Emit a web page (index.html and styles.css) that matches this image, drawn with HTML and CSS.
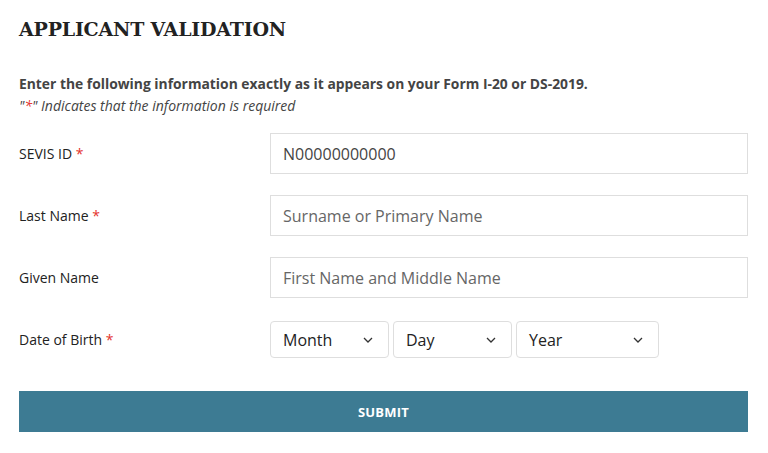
FILE: index.html
```html
<!DOCTYPE html>
<html lang="en">
<head>
<meta charset="utf-8">
<title>Applicant Validation</title>
<link rel="stylesheet" href="styles.css">
</head>
<body>
<main class="page">
  <h1 class="title">APPLICANT VALIDATION</h1>
  <p class="intro">Enter the following information exactly as it appears on your Form I-20 or DS-2019.</p>
  <p class="note">"<span class="req">*</span>" Indicates that the information is required</p>
  <form class="form">
    <div class="row">
      <label class="label" for="sevis">SEVIS ID <span class="req">*</span></label>
      <input class="field" id="sevis" type="text" value="N00000000000">
    </div>
    <div class="row">
      <label class="label" for="last">Last Name <span class="req">*</span></label>
      <input class="field" id="last" type="text" placeholder="Surname or Primary Name">
    </div>
    <div class="row">
      <label class="label" for="given">Given Name</label>
      <input class="field" id="given" type="text" placeholder="First Name and Middle Name">
    </div>
    <div class="row">
      <span class="label">Date of Birth <span class="req">*</span></span>
      <div class="dob">
        <div class="select sel-month"><span>Month</span><svg class="chev" width="10" height="6" viewBox="0 0 10 6"><path d="M1 1l4 4 4-4" fill="none" stroke="#333" stroke-width="1.3"/></svg></div>
        <div class="select sel-day"><span>Day</span><svg class="chev" width="10" height="6" viewBox="0 0 10 6"><path d="M1 1l4 4 4-4" fill="none" stroke="#333" stroke-width="1.3"/></svg></div>
        <div class="select sel-year"><span>Year</span><svg class="chev" width="10" height="6" viewBox="0 0 10 6"><path d="M1 1l4 4 4-4" fill="none" stroke="#333" stroke-width="1.3"/></svg></div>
      </div>
    </div>
    <button class="submit" type="button">SUBMIT</button>
  </form>
</main>
</body>
</html>
```
FILE: styles.css
```css
html, body {
  margin: 0;
  padding: 0;
  background: #fff;
}
body {
  font-family: "Open Sans", "Liberation Sans", sans-serif;
  color: #222;
}
.page {
  padding: 17px 20px 0 19px;
}
.title {
  margin: 0;
  font-family: "DejaVu Serif", serif;
  font-weight: bold;
  font-size: 19px;
  line-height: 24px;
  color: #222;
  letter-spacing: -0.2px;
}
.intro {
  margin: 33px 0 0;
  font-size: 13.85px;
  line-height: 20px;
  font-weight: 700;
  color: #444;
}
.note {
  margin: 2px 0 0;
  font-size: 14px;
  line-height: 19px;
  font-style: italic;
  color: #444;
}
.req {
  color: #e4322b;
  font-style: normal;
}
.note .req {
  font-style: italic;
}
.form {
  margin-top: 18px;
  display: flex;
  flex-direction: column;
  gap: 21px;
}
.row {
  display: flex;
  align-items: center;
  height: 41px;
}
.label {
  width: 251px;
  flex: none;
  font-size: 14px;
  color: #222;
}
.field {
  flex: 1;
  height: 41px;
  box-sizing: border-box;
  border: 1px solid #dedede;
  border-radius: 0;
  padding: 0 12px;
  font-family: "Open Sans", sans-serif;
  font-size: 16px;
  color: #444;
  background: #fff;
  outline: none;
}
.field::placeholder {
  color: #666;
}
.dob {
  display: flex;
  gap: 4px;
}
.select {
  box-sizing: border-box;
  height: 37px;
  border: 1px solid #dedede;
  border-radius: 4px;
  display: flex;
  align-items: center;
  justify-content: space-between;
  padding: 0 15px 0 12px;
  font-size: 16px;
  color: #222;
}
.sel-month, .sel-day { width: 119px; }
.sel-year { width: 143px; }
.chev { display: block; }
.submit {
  margin-top: 10px;
  height: 41px;
  border: 0;
  border-radius: 0;
  background: #3d7b93;
  color: #fff;
  font-family: "Open Sans", sans-serif;
  font-weight: 700;
  font-size: 13px;
  letter-spacing: 0.2px;
}
```
